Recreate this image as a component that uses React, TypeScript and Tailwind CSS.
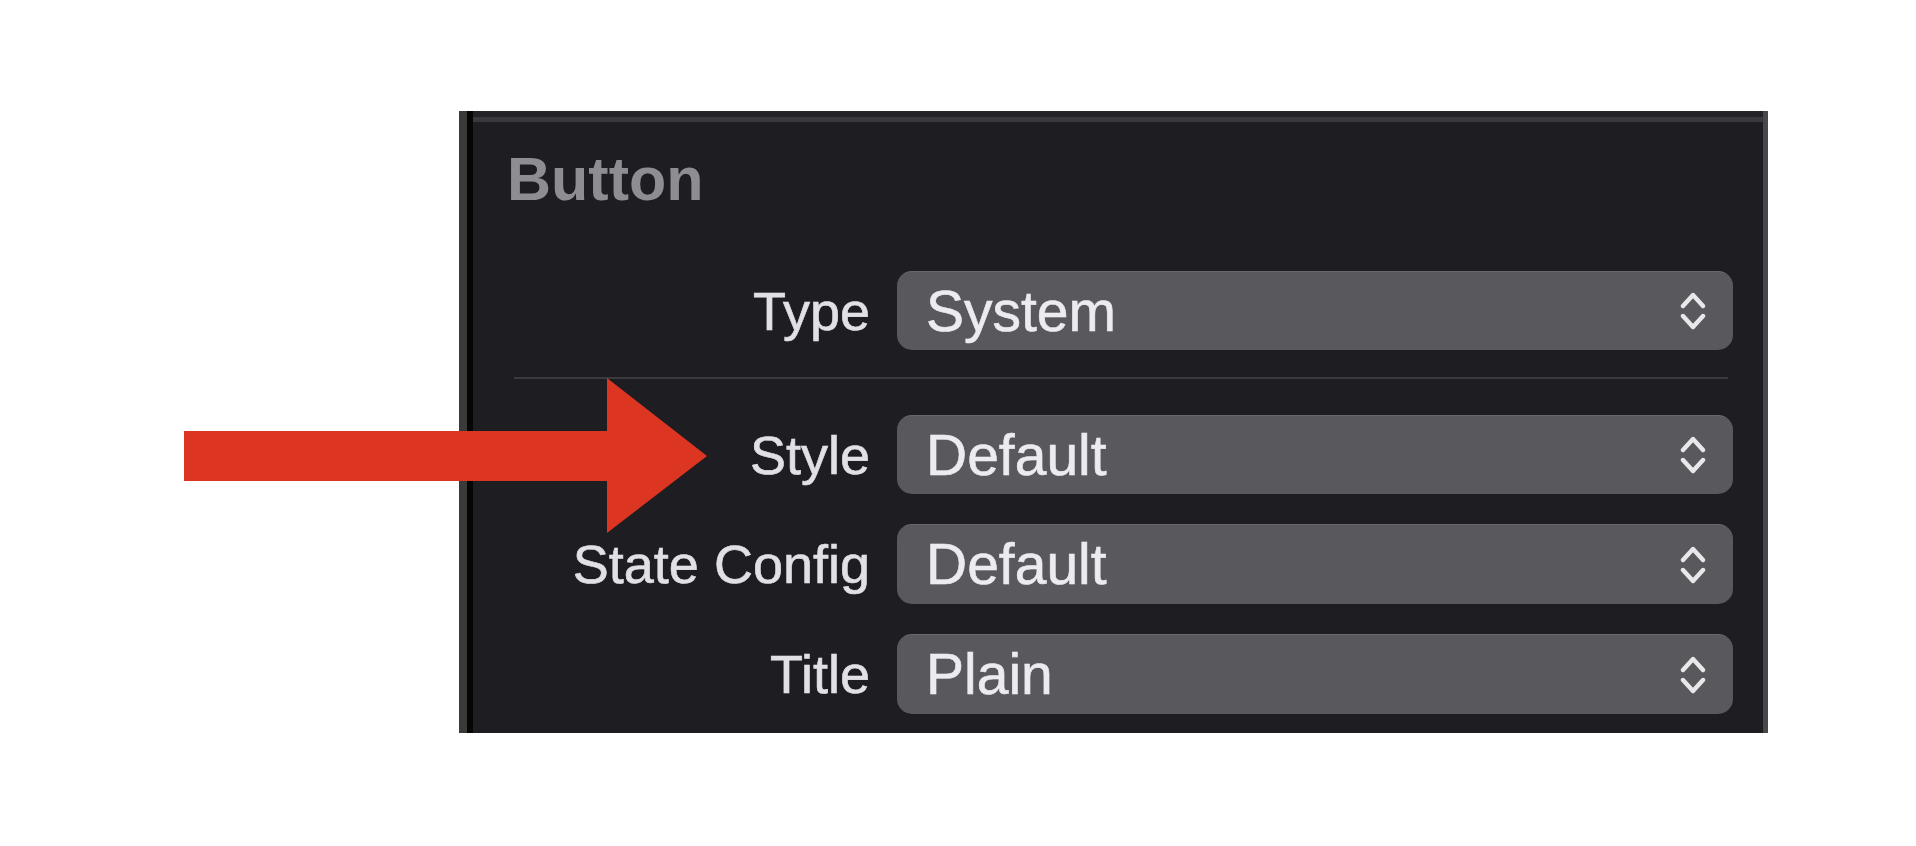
import React from 'react';

const rows = [
  { label: 'Type', value: 'System', mt: 'mt-[61px]', h: 'h-[79px]' },
  { label: 'Style', value: 'Default', mt: 'mt-[36px]', h: 'h-[79px]' },
  { label: 'State Config', value: 'Default', mt: 'mt-[30px]', h: 'h-[80px]' },
  { label: 'Title', value: 'Plain', mt: 'mt-[30px]', h: 'h-[80px]' },
];

const UpDownIcon = () => (
  <svg width="26" height="40" viewBox="0 0 26 40" fill="none" stroke="#e8e8ea" strokeWidth="4.4" strokeLinecap="round" strokeLinejoin="round">
    <polyline points="3,15 13,4 23,15" />
    <polyline points="3,25 13,36 23,25" />
  </svg>
);

const Row: React.FC<{ label: string; value: string; mt: string; h: string }> = ({ label, value, mt, h }) => (
  <div className={`flex items-center ${mt}`}>
    <div className="w-[397px] text-right text-[54px] leading-none text-[#e1e0e4] [-webkit-text-stroke:0.6px_#e1e0e4]">{label}</div>
    <div className={`ml-[27px] flex w-[836px] ${h} items-center justify-between rounded-[15px] border-t border-[#68676c] bg-[#59585d] pl-[29px] pr-[27px]`}>
      <span className="text-[57px] leading-none text-[#ecebef] [-webkit-text-stroke:0.6px_#ecebef]">{value}</span>
      <UpDownIcon />
    </div>
  </div>
);

export default function App() {
  return (
    <div className="relative h-[846px] w-full overflow-hidden bg-white font-['Liberation_Sans',Arial,sans-serif]">
      <div className="pl-[459px] pt-[111px]">
        <div className="flex h-[622px] w-[1309px]">
          <div className="w-[8px] bg-[#3a3a38]" />
          <div className="w-[6px] bg-[#060606]" />
          <div className="flex flex-1 flex-col overflow-hidden bg-[#1e1d22]">
            <div className="h-[6px] bg-[#232327]" />
            <div className="h-[5px] bg-[#39393d]" />

            <h2 className="mt-[27px] pl-[34px] text-[61px] font-bold leading-none text-[#8e8d92]">Button</h2>

            {/* first row, then the divider */}
            <Row {...rows[0]} />
            <div className="ml-[41px] mt-[27px] h-[2px] w-[1214px] bg-[#3b3a3f]" />

            {rows.slice(1).map((r) => (
              <Row key={r.label} {...r} />
            ))}
          </div>
          <div className="w-[5px] bg-[#48484a]" />
        </div>
      </div>

      {/* annotation arrow */}
      <svg className="absolute left-[184px] top-[378px]" width="523" height="155" viewBox="0 0 523 155">
        <polygon points="0,53 423,53 423,0 523,78 423,155 423,103 0,103" fill="#dc3522" />
      </svg>
    </div>
  );
}
